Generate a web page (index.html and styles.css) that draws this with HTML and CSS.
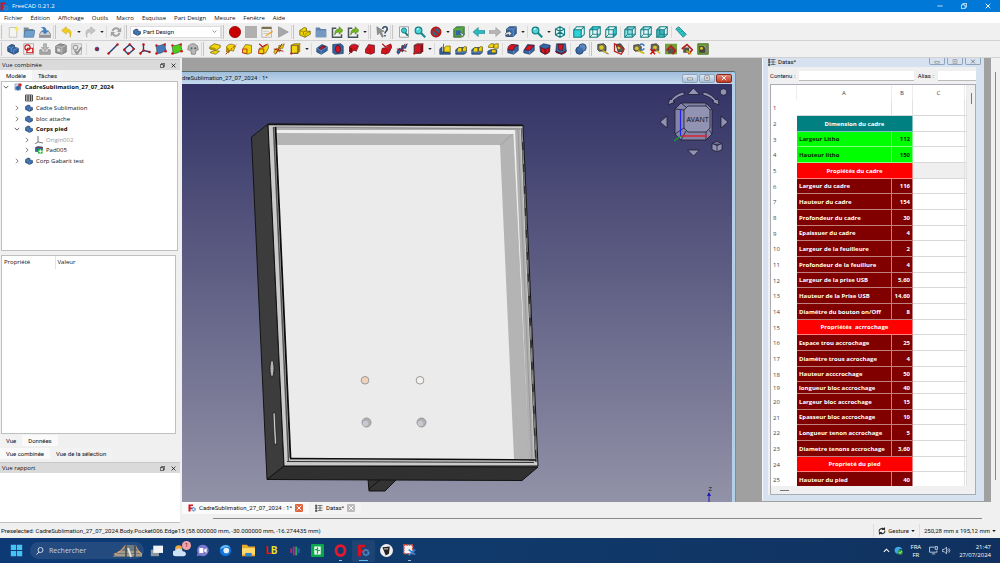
FILE: index.html
```html
<!DOCTYPE html>
<html lang="fr">
<head>
    <meta charset="UTF-8">
    <meta name="viewport" content="width=device-width, initial-scale=1.0">
    <title>FreeCAD 0.21.2</title>
    <link rel="stylesheet" href="styles.css">
</head>
<body>
    <!-- icon sprite, all on a 16x16 grid -->
    <svg class="sprite" aria-hidden="true">
        <symbol id="freecad" viewBox="0 0 16 16"><path d="M1 1h9v3H5v3h4v3H5v5H1z" fill="#d01420"/><circle cx="11" cy="10.500" r="3.200" fill="none" stroke="#4f86c6" stroke-width="2.500" stroke-dasharray="2.500 .6"/></symbol>
        <symbol id="new" viewBox="0 0 16 16"><path d="M3 2h10v13H3z" fill="#f4f4f2" stroke="#b8b8b4"/><path d="M13 0l1 3 2 1-2 1-1 3-1-3-3-1 3-1z" fill="#fce94f"/></symbol>
        <symbol id="open" viewBox="0 0 16 16"><path d="M1 2h6l1 2h6v9H1z" fill="#7a8a96"/><path d="M3 6h13l-2 9H1z" fill="#6f9fcf" stroke="#3f6f9f" stroke-width=".8"/></symbol>
        <symbol id="save" viewBox="0 0 16 16"><path d="M3 7h10l3 5v3H0v-3z" fill="#c9ccd0" stroke="#777"/><path d="M1 12h14v3H1z" fill="#8e9499"/><path d="M2 2c5-2 8 0 8 4h3l-5 5-5-5h3c0-2-1-3-4-4z" fill="#3f7fc0"/></symbol>
        <symbol id="undo" viewBox="0 0 16 16"><path d="M1 6l6-5v3c6 0 8 4 5 11 1-5-1-7-5-7v3z" fill="#f2cf1d" stroke="#c4a000" stroke-width=".7"/></symbol>
        <symbol id="redo" viewBox="0 0 16 16"><path d="M15 6L9 1v3C3 4 1 8 4 15 3 10 5 8 9 8v3z" fill="#c4c4c4" stroke="#a8a8a8" stroke-width=".7"/></symbol>
        <symbol id="refresh" viewBox="0 0 16 16"><path d="M2 7c1-6 8-7 11-3l2-2v6H9l2-2C9 3 5 4 5 7zM14 9c-1 6-8 7-11 3l-2 2V8h6l-2 2c2 3 6 2 6-1z" fill="#a2a4a0"/></symbol>
        <symbol id="record" viewBox="0 0 16 16"><circle cx="8" cy="8" r="7.500" fill="#c80000" stroke="#8f0000"/></symbol>
        <symbol id="stop" viewBox="0 0 16 16"><path d="M0 0h16v16H0z" fill="#b0b0b0"/></symbol>
        <symbol id="macro" viewBox="0 0 16 16"><path d="M1 2h13v13H1z" fill="#efefec" stroke="#aaa"/><path d="M1 1h13v3H1z" fill="#7c6f50"/><path d="M3 7h7M3 10h6" stroke="#bbb"/><path d="M15 6l-8 6-2 2 3-1 8-5z" fill="#f0a030"/></symbol>
        <symbol id="play" viewBox="0 0 16 16"><path d="M2 1l13 7-13 7z" fill="#a8a8a8" stroke="#959595"/></symbol>
        <symbol id="part" viewBox="0 0 16 16"><path d="M1 6l6-4 3 1v4l5 0v4l-7 4-7-3z" fill="#edd400" stroke="#6b5c00"/><path d="M1 6l5 2v4M6 8l4-2M8 11l7-4M8 11v4" fill="none" stroke="#8a7600"/></symbol>
        <symbol id="folder" viewBox="0 0 16 16"><path d="M1 2h5l2 2h7v11H1z" fill="#5f83ad"/><path d="M1 6h14v9H1z" fill="#7699bf"/></symbol>
        <symbol id="export" viewBox="0 0 16 16"><path d="M7 3H2v12h12v-4" fill="none" stroke="#45545e" stroke-width="2"/><path d="M5 12c0-6 2-8 6-8V1l5 5-5 5V8c-3 0-5 1-6 4z" fill="#73b81f" stroke="#3d6a08" stroke-width=".7"/></symbol>
        <symbol id="whats" viewBox="0 0 16 16"><path d="M1 1l10 6-4 1 3 6-2 1-3-6-3 3z" fill="#8e908c" stroke="#666" stroke-width=".6"/><path d="M9 4c0-4 6-4 6 0 0 3-3 3-3 6M12 12v2" fill="none" stroke="#38506c" stroke-width="2.200"/></symbol>
        <symbol id="fit" viewBox="0 0 16 16"><path d="M2 1h12v14H2z" fill="#f8f8f8" stroke="#888"/><circle cx="8" cy="6" r="3.500" fill="#34c8cc" stroke="#0d6e72"/><path d="M10 9l3 4" stroke="#0d6e72" stroke-width="2.500"/></symbol>
        <symbol id="mag" viewBox="0 0 16 16"><circle cx="6" cy="6" r="4.500" fill="#4fd3d6" stroke="#127b80" stroke-width="1.500"/><path d="M9 9l6 6" stroke="#168a90" stroke-width="3"/><path d="M4 5l2-2" stroke="#e6ffff" stroke-width="1.500"/></symbol>
        <symbol id="nodraw" viewBox="0 0 16 16"><path d="M1 8a7 7 0 1 1 14 0A7 7 0 1 1 1 8z" fill="#2c6b8a"/><circle cx="8" cy="8" r="6" fill="none" stroke="#c01a1a" stroke-width="2.500"/><path d="M4 4l8 8" stroke="#c01a1a" stroke-width="2.500"/></symbol>
        <symbol id="bbox" viewBox="0 0 16 16"><path d="M1 4l4-3h10v11l-4 3H1z" fill="#4f9a4c" stroke="#2c5a2a"/><path d="M4 6h7v6H4z" fill="#3465a4"/><path d="M1 4h10v11M11 4l4-3" fill="none" stroke="#6cc030"/><path d="M9 8l6 4-2 1 1 2" fill="#fff" stroke="#333" stroke-width=".7"/></symbol>
        <symbol id="back" viewBox="0 0 16 16"><path d="M0 8l7-6v4h9v4H7v4z" fill="#27bcc0" stroke="#12777a" stroke-width=".7"/></symbol>
        <symbol id="fwd" viewBox="0 0 16 16"><path d="M16 8L9 2v4H0v4h9v4z" fill="#b4b4b4" stroke="#999" stroke-width=".7"/></symbol>
        <symbol id="link" viewBox="0 0 16 16"><path d="M2 4l4-3h9v9l-4 4H2z" fill="#3b6ca8" stroke="#1c3760"/><path d="M2 4h9v10M11 4l4-3" fill="none" stroke="#729fcf"/><path d="M0 14c0-5 2-6 5-6V6l4 4-4 4v-3c-2 0-4 1-5 3z" fill="#dfe8f2" stroke="#222" stroke-width=".7"/></symbol>
        <symbol id="iso" viewBox="0 0 16 16"><path d="M8 1l6 3v8l-6 3-6-3V4z" fill="#e6fafa"/><path d="M8 1l6 3v8l-6 3-6-3V4zM2 4l6 3 6-3M8 1v14M2 12l6-4 6 4" fill="none" stroke="#147a80" stroke-width="1.500"/></symbol>
        <symbol id="cube" viewBox="0 0 16 16"><path d="M1 5l4-4h10v10l-4 4H1z" fill="#e4f8f8"/><path class="f" d="M1 5h10v10H1z"/><path class="t" d="M1 5l4-4h10l-4 4z"/><path class="r" d="M11 5l4-4v10l-4 4z"/><path d="M1 5l4-4h10v10l-4 4H1zM1 5h10v10M11 5l4-4" fill="none" stroke="#167d82" stroke-width="1.400"/><path class="w" d="M5 1v10h10M5 11l-4 4"/></symbol>
        <symbol id="measure" viewBox="0 0 16 16"><path d="M1 4l4-3 10 10-4 4z" fill="#2cc3c8" stroke="#12777a"/><path d="M5 5l1-1M8 8l1-1M11 11l1-1" stroke="#0a5558"/></symbol>

        <symbol id="body" viewBox="0 0 16 16"><path d="M1 5l5-3 4 1v3l5 1v5l-6 3-8-4z" fill="#3465a4" stroke="#14294a"/><path d="M1 5l5 2 4-3M6 7v5M9 9l6-2M9 9v6" fill="none" stroke="#7fa8d8" stroke-width=".8"/></symbol>
        <symbol id="sketch" viewBox="0 0 16 16"><path d="M1 1h13v14H1z" fill="#f6f6f6" stroke="#999"/><circle cx="6" cy="6" r="3.500" fill="none" stroke="#cc1111" stroke-width="1.500"/><path d="M6 7h7v6H5z" fill="none" stroke="#cc1111" stroke-width="1.500"/></symbol>
        <symbol id="import" viewBox="0 0 16 16"><path d="M1 9h3v3h8V9h3v6H1z" fill="#aaa" stroke="#888"/><path d="M6 1h4v5h3l-5 5-5-5h3z" fill="#b8b8b8" stroke="#888" stroke-width=".7"/></symbol>
        <symbol id="gbox" viewBox="0 0 16 16"><path d="M1 4l6-3 8 2v9l-6 3-8-2z" fill="#969696" stroke="#666"/><path d="M1 4l8 2v9M9 6l6-3" fill="none" stroke="#ccc"/><path d="M3 7l4 1v4l-4-1z" fill="#ddd"/></symbol>
        <symbol id="valid" viewBox="0 0 16 16"><path d="M1 1h13v14H1z" fill="#e8e8e8" stroke="#aaa"/><circle cx="6" cy="6" r="3" fill="none" stroke="#999" stroke-width="1.500"/><path d="M5 10l3 4 6-8" fill="none" stroke="#8c8c8c" stroke-width="2.500"/></symbol>
        <symbol id="point" viewBox="0 0 16 16"><circle cx="8" cy="8" r="2.500" fill="#a01c38" stroke="#1c3c78"/></symbol>
        <symbol id="line" viewBox="0 0 16 16"><path d="M2 14L14 2" stroke="#243f6e" stroke-width="1.800"/><circle cx="2" cy="14" r="1.600" fill="#c11"/><circle cx="14" cy="2" r="1.600" fill="#c11"/></symbol>
        <symbol id="plane" viewBox="0 0 16 16"><path d="M1 9l8-7 6 6-8 7z" fill="#e8f0fa" stroke="#243f6e" stroke-width="1.800"/><circle cx="2" cy="9" r="1.600" fill="#c11"/><circle cx="9" cy="2" r="1.600" fill="#c11"/><circle cx="14" cy="8" r="1.600" fill="#c11"/><circle cx="7" cy="14" r="1.600" fill="#c11"/></symbol>
        <symbol id="axes" viewBox="0 0 16 16"><path d="M6 1v9l9 2M6 10l-5 4" fill="none" stroke="#243f6e" stroke-width="1.800"/><circle cx="6" cy="2" r="1.600" fill="#c11"/><circle cx="14" cy="12" r="1.600" fill="#c11"/><circle cx="2" cy="14" r="1.600" fill="#c11"/><circle cx="6" cy="10" r="1.600" fill="#c11"/></symbol>
        <symbol id="binder" viewBox="0 0 16 16"><path d="M1 3c4 2 8-1 13-2-1 4 0 7 1 10-5 0-7 4-13 3 1-4 0-7-1-11z" fill="currentColor" stroke="#244" stroke-width=".8"/><circle cx="2" cy="14" r="1.700" fill="#d11"/><circle cx="14" cy="11" r="1.700" fill="#d11"/><circle cx="2" cy="3" r="1.500" fill="#d11"/><circle cx="13" cy="2" r="1.500" fill="#d11"/></symbol>
        <symbol id="clone" viewBox="0 0 16 16"><path d="M2 4c3-4 9-4 12 0l1 5-3 1-1 5H6l-1-5-4-1z" fill="#b8b8b8" stroke="#777"/><circle cx="6" cy="7" r="1.500" fill="#666"/><circle cx="11" cy="7" r="1.500" fill="#666"/></symbol>

        <!-- modelling operations: .m main face, .d dark face, .s sketch face -->
        <symbol id="pad" viewBox="0 0 16 16"><path class="m" d="M1 5l6-4 8 2v3l-6 4-8-2z"/><path class="d" d="M1 5l8 2v3L1 8z"/><path class="m" d="M2 12l6-2 6 1-5 4-7-2z"/></symbol>
        <symbol id="revolve" viewBox="0 0 16 16"><path class="m" d="M2 5c3-5 9-4 12-1l-3 7c-3-2-5-1-6 2L2 12z"/><path class="d" d="M2 5l4 3-1 5-3-1z"/><path d="M1 15L15 2" stroke="#a11" stroke-width="1.300" stroke-dasharray="3 1.500"/></symbol>
        <symbol id="loft" viewBox="0 0 16 16"><path class="m" d="M6 2l8 1v10l-5 2-7-2 1-6z"/><path class="s" d="M2 8l6 0v6l-6-1z"/></symbol>
        <symbol id="pipe" viewBox="0 0 16 16"><path class="m" d="M3 7l6-1 5-5 2 4-4 8-5 2-5-2z"/><path class="s" d="M3 8h6v6H2z"/><path d="M3 1l4 4 6-3" fill="none" stroke="#b11" stroke-width="1.500"/></symbol>
        <symbol id="helix" viewBox="0 0 16 16"><path class="m" d="M1 12l3-5 3 1 1-5 3 1 4-3-2 6-3 0-1 5-3-2-3 5z"/><path d="M1 8l13 3M4 14L12 1" stroke="#a11" stroke-width="1.200"/></symbol>
        <symbol id="prim" viewBox="0 0 16 16"><path class="m" d="M3 3l4-2h8l-3 3v9l-9 1z"/><path class="d" d="M12 4l3-3v10l-3 3z"/><path d="M3 3h9v11H3z" fill="none" stroke="#633"/><circle cx="3" cy="14" r="1.500" fill="#c11"/></symbol>
        <symbol id="pocket" viewBox="0 0 16 16"><path class="b" d="M1 7l7-5 7 3v5l-8 5-6-3z"/><path class="m" d="M4 7l5-3 4 1-6 4z"/><path d="M1 7l6 3v5M7 10l8-5" fill="none" stroke="#7fa8d8" stroke-width=".8"/></symbol>
        <symbol id="hole" viewBox="0 0 16 16"><path class="b" d="M1 2l11-1 3 3v10l-11 1-3-2z"/><ellipse class="m" cx="8" cy="8" rx="3.500" ry="5"/></symbol>
        <symbol id="pattern" viewBox="0 0 16 16"><path class="b" d="M1 9l4-3h10v7l-3 2H1z"/><path class="m" d="M3 9l2-3h4v6H3zM10 8l2-3h3v6h-5z"/><path d="M1 12h14" stroke="#7fa8d8" stroke-width=".8"/></symbol>
        <symbol id="mirror" viewBox="0 0 16 16"><path class="b" d="M1 8l3-3v7h9l2 1v2H1z"/><path class="m" d="M7 6l3-2h5v8H7z"/><path d="M6 1v13" stroke="#246" stroke-width="1"/></symbol>
        <symbol id="multi" viewBox="0 0 16 16"><path class="b" d="M1 11l4-2h8v5l-3 1H1z"/><path class="m" d="M2 4l3-3h4v5H2zM9 4l2-3h4v6H9zM6 9h6v4H6z"/></symbol>
        <symbol id="fillet" viewBox="0 0 16 16"><path class="b" d="M1 9l5-7 9 1v7l-6 5-8-2z"/><path class="m" d="M1 9c0-5 3-7 6-7l8 1c-4 1-6 3-6 7z"/><path d="M9 10v5" stroke="#7fa8d8"/></symbol>
        <symbol id="chamfer" viewBox="0 0 16 16"><path class="b" d="M1 10l5-8 9 1v7l-6 5-8-2z"/><path class="m" d="M2 9l5-6 8 0-6 7z"/><path d="M9 10v5" stroke="#7fa8d8"/></symbol>
        <symbol id="draft" viewBox="0 0 16 16"><path class="b" d="M1 4l5-3 9 2-1 9-6 3-6-3z"/><path class="m" d="M2 6l6 2v7l-5-3zM9 8l5-2-1 7-4 2z"/></symbol>
        <symbol id="thick" viewBox="0 0 16 16"><path class="b" d="M2 1h12l1 10-6 4-8-3z"/><path class="m" d="M4 2h7l-1 8-5-1z"/><path class="m" d="M1 11l8 3 6-4-1 3-5 2-7-2z"/></symbol>
        <symbol id="bool" viewBox="0 0 16 16"><circle cx="6" cy="10" r="5" fill="#3465a4" stroke="#1c3a68"/><circle cx="10" cy="6" r="5" fill="#5b86bb" stroke="#1c3a68"/><circle cx="7" cy="9" r="3.500" fill="#3f6faa"/></symbol>
        <symbol id="tape" viewBox="0 0 16 16"><path d="M1 2l8-1 3 3v6l-9 1-2-2z" fill="#6b6b5e" stroke="#2e2e28"/><circle cx="6" cy="6" r="3" fill="#d8c820"/><path d="M8 9l7 5v1l-8-4z" fill="#edd400" stroke="#555" stroke-width=".6"/></symbol>
        <symbol id="tape-angle" viewBox="0 0 16 16"><path d="M4 2l6-1 4 5v5l-7 1z" fill="#5c5c52" stroke="#222"/><circle cx="8" cy="6" r="2" fill="#d8c820"/><path d="M2 1v10l9 4 4-7z" fill="none" stroke="#b52020" stroke-width="1.700"/></symbol>
        <symbol id="tape-refresh" viewBox="0 0 16 16"><path d="M1 3l7-1 3 3v5l-8 1-2-2z" fill="#6b6b5e" stroke="#2e2e28"/><circle cx="5" cy="7" r="2.500" fill="#d8c820"/><path d="M9 3c3-3 5-1 6 1M15 7c-1 3-4 3-6 1" fill="none" stroke="#3f74b5" stroke-width="2"/><path d="M7 10l8 4" stroke="#cdb800" stroke-width="2"/></symbol>
        <symbol id="tape-clear" viewBox="0 0 16 16"><path d="M3 2l7-1 3 3v6l-8 1-2-2z" fill="#6b6b5e" stroke="#2e2e28"/><circle cx="8" cy="6" r="2.500" fill="#d8c820"/><path d="M2 8l6 7M8 8l-6 7" stroke="#c11" stroke-width="2"/><path d="M10 10l5 4" stroke="#cdb800" stroke-width="2"/></symbol>
        <symbol id="tape-all" viewBox="0 0 16 16"><path d="M0 1h16v14H0z" fill="#6fa03a"/><path d="M4 7h8v7H4z" fill="#55554a"/><path d="M2 10l6-6 6 6-4 5" fill="none" stroke="#b52020" stroke-width="2.500"/></symbol>
        <symbol id="tape-3d" viewBox="0 0 16 16"><path d="M3 6h8v7H3z" fill="#55554a"/><path d="M1 8l7-6 7 7-5 6" fill="none" stroke="#b52020" stroke-width="2.200"/><path d="M7 10l7 5" stroke="#cdb800" stroke-width="2"/></symbol>
        <symbol id="tape-delta" viewBox="0 0 16 16"><path d="M1 1h14v14H1z" fill="#6fa03a" stroke="#345a10"/><path d="M3 4h10v9H3z" fill="#44443c"/><circle cx="6" cy="7" r="2" fill="#d8c820"/><path d="M9 5h3v8" fill="none" stroke="#cfcfc0"/></symbol>

        <symbol id="chev" viewBox="0 0 16 16"><path d="M2 5l6 6 6-6" fill="none" stroke="currentColor" stroke-width="2.500"/></symbol>
        <symbol id="chev-r" viewBox="0 0 16 16"><path d="M5 2l6 6-6 6" fill="none" stroke="currentColor" stroke-width="2"/></symbol>
        <symbol id="tri" viewBox="0 0 16 16"><path d="M1 4h14l-7 8z" fill="currentColor"/></symbol>
        <symbol id="cross" viewBox="0 0 16 16"><path d="M2 2l12 12M14 2L2 14" fill="none" stroke="currentColor" stroke-width="2.500"/></symbol>
        <symbol id="restore" viewBox="0 0 16 16"><path d="M1 5h10v10H1zM5 5V1h10v10h-4" fill="none" stroke="currentColor" stroke-width="2"/></symbol>
        <symbol id="min" viewBox="0 0 16 16"><path d="M1 8h14" stroke="currentColor" stroke-width="2"/></symbol>
        <symbol id="mdi-min" viewBox="0 0 16 16"><path d="M1 8h14v5H1z" fill="#fff" stroke="#555" stroke-width="1.500"/></symbol>
        <symbol id="mdi-max" viewBox="0 0 16 16"><path d="M2 2h12v12H2zM6 6h4v4H6z" fill="#fff" stroke="#555" stroke-width="1.500"/></symbol>
        <symbol id="grid" viewBox="0 0 16 16"><path d="M1 2h14v12H1zM1 6h14M1 10h14M6 2v12M11 2v12" fill="#fff" stroke="#222" stroke-width="1.500"/></symbol>
        <symbol id="sheet" viewBox="0 0 16 16"><path d="M1 2h3v3H1zM1 7h3v3H1zM1 12h3v3H1zM6 3h9M6 8h9M6 13h9M10 2v12" fill="#555" stroke="#555" stroke-width="1.500"/></symbol>
        <symbol id="doc" viewBox="0 0 16 16"><path d="M2 2h8l3 3v9H2z" fill="#dce6f0" stroke="#3465a4"/><path d="M3 8l5-3 5 3v4l-5 3-5-3z" fill="#3465a4"/><circle cx="12" cy="4" r="3.500" fill="#c8232c"/></symbol>
        <symbol id="pad-tree" viewBox="0 0 16 16"><path d="M1 3l4-2 10 1v5l-4 4H1z" fill="#3465a4" stroke="#14294a"/><path d="M1 3l9 1 5-2" fill="#c22"/><path d="M6 6h9v9H6z" fill="#0fae2a"/><path d="M10.500 7v7M7 10.500h7" stroke="#fff" stroke-width="2"/></symbol>
        <symbol id="rotate" viewBox="0 0 16 16"><path d="M2 9c0-6 8-8 11-4V1M13 5H8M14 8c0 5-7 7-11 3v4M3 11h5" fill="none" stroke="#333" stroke-width="2.200"/></symbol>

        <symbol id="t-start" viewBox="0 0 16 16"><path d="M1 1h6.500v6.500H1zM8.500 1H15v6.500H8.500zM1 8.500h6.500V15H1zM8.500 8.500H15V15H8.500z" fill="#46c3f5"/></symbol>
        <symbol id="t-search" viewBox="0 0 16 16"><circle cx="9" cy="6" r="5" fill="none" stroke="#dce6f2" stroke-width="1.800"/><path d="M6 10l-5 5" stroke="#dce6f2" stroke-width="2"/></symbol>
        <symbol id="t-bridge" viewBox="0 0 30 14"><path d="M1 10C8 9 10 4 13 1l8 0c1 3 4 7 8 8v4H0z" fill="#6c7b80"/><path d="M1 10C8 9 10 4 13 1M29 10C25 8 23 3 22 1" fill="none" stroke="#d39a6a" stroke-width="1.200"/><path d="M2 11h27M5 8h22" stroke="#e0b98c"/><path d="M13 1v12M22 1v12" stroke="#3f4852" stroke-width="1.500"/><path d="M15 4l3 9" stroke="#dfe4e2" stroke-width="2"/></symbol>
        <symbol id="t-tasks" viewBox="0 0 16 16"><path d="M1 7h10v8H1z" fill="#8f979e"/><path d="M4 2h12v9H4z" fill="#f1f3f5"/></symbol>
        <symbol id="t-weather" viewBox="0 0 16 16"><circle cx="7" cy="6" r="4.500" fill="#f0a63a"/><path d="M3 15a3.500 3.500 0 0 1 0-7c2-4 8-3 9 1 5 0 5 6 1 6z" fill="#cfe2f7"/></symbol>
        <symbol id="t-chat" viewBox="0 0 16 16"><path d="M8 1a7 7 0 1 1-3 13l-4 1 1-4A7 7 0 0 1 8 1z" fill="#7b79cf"/><path d="M4 5h5v6H4zM10 7l3-2v6l-3-2z" fill="#fff"/></symbol>
        <symbol id="t-bird" viewBox="0 0 16 16"><circle cx="8" cy="8" r="7" fill="#1373d9"/><path d="M1 6C3 1 12-1 14 5c-3-2-6-1-8 0z" fill="#62b8f7"/><circle cx="9" cy="8" r="3.500" fill="#e5f0fa"/></symbol>
        <symbol id="t-files" viewBox="0 0 16 16"><path d="M0 1h6l2 2h8v12H0z" fill="#e8a92c"/><path d="M0 5h16v8H0z" fill="#ffd96a"/><path d="M4 11h8v4H4z" fill="#2e83d4"/></symbol>
        <symbol id="t-bars" viewBox="0 0 16 16"><path d="M2 4v7" stroke="#c5246f" stroke-width="3"/><path d="M6 1v14" stroke="#a82b7d" stroke-width="3"/><path d="M10 1v14" stroke="#2fa866" stroke-width="3"/><path d="M14 4v7" stroke="#2463b4" stroke-width="3"/></symbol>
        <symbol id="t-green" viewBox="0 0 16 16"><rect x="0" y="0" width="16" height="16" rx="1.500" fill="#0aa84a"/><path d="M4 3h8v10H4z" fill="#eafaf0"/><path d="M5 7h3V4M11 8H8v4" stroke="#0aa84a" fill="none" stroke-width="1.500"/></symbol>
        <symbol id="t-opera" viewBox="0 0 16 16"><ellipse cx="8" cy="8" rx="5.500" ry="6" fill="none" stroke="#e8182c" stroke-width="3.500"/></symbol>
        <symbol id="t-ink" viewBox="0 0 16 16"><circle cx="8" cy="8" r="8" fill="#f0f0f0"/><path d="M3 4l9-1-1 9-4 2z" fill="#222"/><path d="M5 6l5 0" stroke="#fff"/></symbol>
        <symbol id="t-snip" viewBox="0 0 16 16"><path d="M1 1h11v11H1z" fill="#f4f4f4" stroke="#d9443a" stroke-dasharray="2 1" stroke-width="2"/><path d="M7 7l8 6M15 7l-8 7" stroke="#2f86d8" stroke-width="2"/></symbol>
        <symbol id="t-shield" viewBox="0 0 16 16"><path d="M1 7c1-7 12-8 14 0-3-3-6-2-6 1 1 3 2 4 4 5-6 3-12 0-12-6z" fill="#3fa7e8"/><circle cx="11" cy="11" r="4.500" fill="#2d9c3c"/><path d="M9 11l2 2 3-4" stroke="#fff" fill="none" stroke-width="1.300"/></symbol>
        <symbol id="t-net" viewBox="0 0 16 16"><path d="M10 2H1v9h13V8M5 14h6M11 1h4v5h-4z" fill="none" stroke="#dfe8f2" stroke-width="1.400"/></symbol>
        <symbol id="t-vol" viewBox="0 0 16 16"><path d="M1 6h3l4-4v12l-4-4H1zM10 6q2 2 0 4M12 4q4 4 0 8" fill="none" stroke="#dfe8f2" stroke-width="1.300"/></symbol>
    </svg>

    <header class="titlebar">
        <svg class="app-icon"><use href="#freecad"/></svg>
        <span>FreeCAD 0.21.2</span>
        <div class="win-buttons">
            <button title="Réduire"><svg><use href="#min"/></svg></button>
            <button title="Restaurer"><svg><use href="#restore"/></svg></button>
            <button title="Fermer"><svg><use href="#cross"/></svg></button>
        </div>
    </header>

    <nav class="menubar">
        <button>Fichier</button><button>Édition</button><button>Affichage</button><button>Outils</button><button>Macro</button><button>Esquisse</button><button>Part Design</button><button>Mesure</button><button>Fenêtre</button><button>Aide</button>
    </nav>

    <div class="toolbar toolbar-main">
        <i class="grip first"></i>
        <button title="Nouveau"><svg><use href="#new"/></svg></button>
        <button title="Ouvrir"><svg><use href="#open"/></svg></button>
        <button title="Enregistrer"><svg><use href="#save"/></svg></button>
        <i class="grip"></i>
        <button title="Annuler"><svg><use href="#undo"/></svg></button>
        <button class="more" title="Historique"><svg><use href="#tri"/></svg></button>
        <button title="Rétablir"><svg><use href="#redo"/></svg></button>
        <button class="more" title="Historique"><svg><use href="#tri"/></svg></button>
        <i class="sep"></i>
        <button title="Rafraîchir"><svg><use href="#refresh"/></svg></button>
        <i class="grip"></i>
        <label class="workbench">
            <svg><use href="#body"/></svg>
            <select title="Atelier"><option>Part Design</option></select>
            <svg class="drop"><use href="#chev"/></svg>
        </label>
        <i class="grip"></i>
        <button title="Enregistrer une macro"><svg><use href="#record"/></svg></button>
        <button title="Arrêter"><svg><use href="#stop"/></svg></button>
        <button title="Macros"><svg><use href="#macro"/></svg></button>
        <button title="Exécuter"><svg><use href="#play"/></svg></button>
        <i class="grip"></i>
        <button title="Pièce"><svg><use href="#part"/></svg></button>
        <button title="Groupe"><svg><use href="#folder"/></svg></button>
        <button title="Lien"><svg><use href="#export"/></svg></button>
        <button title="Sous-lien"><svg><use href="#export"/></svg></button>
        <button class="more" title="Plus"><svg><use href="#tri"/></svg></button>
        <i class="grip"></i>
        <button title="Qu'est-ce que c'est ?"><svg><use href="#whats"/></svg></button>
        <i class="grip"></i>
        <button title="Tout afficher"><svg><use href="#fit"/></svg></button>
        <button title="Afficher la sélection"><svg><use href="#mag"/></svg></button>
        <button title="Style de représentation"><svg><use href="#nodraw"/></svg></button>
        <button class="more" title="Plus"><svg><use href="#tri"/></svg></button>
        <button title="Boîte englobante"><svg><use href="#bbox"/></svg></button>
        <i class="sep wide"></i>
        <button title="Précédent"><svg><use href="#back"/></svg></button>
        <button title="Suivant"><svg><use href="#fwd"/></svg></button>
        <button title="Aller à l'objet lié"><svg><use href="#link"/></svg></button>
        <button class="more" title="Plus"><svg><use href="#tri"/></svg></button>
        <i class="sep"></i>
        <button title="Zoom"><svg><use href="#mag"/></svg></button>
        <button class="more" title="Plus"><svg><use href="#tri"/></svg></button>
        <button title="Isométrique"><svg><use href="#iso"/></svg></button>
        <i class="sep"></i>
        <button class="face-front" title="Avant"><svg><use href="#cube"/></svg></button>
        <button class="face-top" title="Dessus"><svg><use href="#cube"/></svg></button>
        <button class="face-right" title="Droite"><svg><use href="#cube"/></svg></button>
        <i class="sep"></i>
        <button class="face-rear" title="Arrière"><svg><use href="#cube"/></svg></button>
        <button class="face-bottom" title="Dessous"><svg><use href="#cube"/></svg></button>
        <button class="face-left" title="Gauche"><svg><use href="#cube"/></svg></button>
        <i class="sep"></i>
        <button title="Mesurer"><svg><use href="#measure"/></svg></button>
    </div>

    <div class="toolbar toolbar-design">
        <i class="grip first"></i>
        <button title="Corps"><svg><use href="#body"/></svg></button>
        <button title="Esquisse"><svg><use href="#sketch"/></svg></button>
        <button title="Éditer"><svg><use href="#import"/></svg></button>
        <button title="Appliquer"><svg><use href="#gbox"/></svg></button>
        <button title="Valider"><svg><use href="#valid"/></svg></button>
        <i class="sep"></i>
        <button title="Point"><svg><use href="#point"/></svg></button>
        <button title="Ligne"><svg><use href="#line"/></svg></button>
        <button title="Plan"><svg><use href="#plane"/></svg></button>
        <button title="Repère"><svg><use href="#axes"/></svg></button>
        <button class="blue" title="Forme liée"><svg><use href="#binder"/></svg></button>
        <button class="green" title="Sous-forme liée"><svg><use href="#binder"/></svg></button>
        <button title="Clone"><svg><use href="#clone"/></svg></button>
        <i class="grip"></i>
        <button class="add" title="Protrusion"><svg><use href="#pad"/></svg></button>
        <button class="add" title="Révolution"><svg><use href="#revolve"/></svg></button>
        <button class="add" title="Lissage"><svg><use href="#loft"/></svg></button>
        <button class="add" title="Balayage"><svg><use href="#pipe"/></svg></button>
        <button class="add" title="Hélice"><svg><use href="#helix"/></svg></button>
        <button class="add" title="Primitive"><svg><use href="#prim"/></svg></button>
        <button class="more" title="Plus"><svg><use href="#tri"/></svg></button>
        <i class="sep"></i>
        <button class="cut" title="Cavité"><svg><use href="#pocket"/></svg></button>
        <button class="cut" title="Perçage"><svg><use href="#hole"/></svg></button>
        <button class="cut" title="Rainure"><svg><use href="#revolve"/></svg></button>
        <button class="cut" title="Lissage soustractif"><svg><use href="#loft"/></svg></button>
        <button class="cut" title="Balayage soustractif"><svg><use href="#pipe"/></svg></button>
        <button class="cut-blue" title="Hélice soustractive"><svg><use href="#helix"/></svg></button>
        <button class="cut" title="Primitive soustractive"><svg><use href="#prim"/></svg></button>
        <button class="more" title="Plus"><svg><use href="#tri"/></svg></button>
        <i class="sep"></i>
        <button class="add" title="Symétrie"><svg><use href="#mirror"/></svg></button>
        <button class="add" title="Répétition linéaire"><svg><use href="#pattern"/></svg></button>
        <button class="add" title="Répétition circulaire"><svg><use href="#pattern"/></svg></button>
        <button class="add" title="Transformation multiple"><svg><use href="#multi"/></svg></button>
        <i class="sep"></i>
        <button class="cut" title="Congé"><svg><use href="#fillet"/></svg></button>
        <button class="cut" title="Chanfrein"><svg><use href="#chamfer"/></svg></button>
        <button class="cut" title="Dépouille"><svg><use href="#draft"/></svg></button>
        <button class="cut" title="Évidement"><svg><use href="#thick"/></svg></button>
        <i class="sep"></i>
        <button title="Opération booléenne"><svg><use href="#bool"/></svg></button>
        <i class="grip"></i>
        <button title="Mesure linéaire"><svg><use href="#tape"/></svg></button>
        <button title="Mesure angulaire"><svg><use href="#tape-angle"/></svg></button>
        <i class="sep"></i>
        <button title="Rafraîchir"><svg><use href="#tape-refresh"/></svg></button>
        <button title="Effacer"><svg><use href="#tape-clear"/></svg></button>
        <button title="Tout basculer"><svg><use href="#tape-all"/></svg></button>
        <button title="Basculer 3D"><svg><use href="#tape-3d"/></svg></button>
        <button title="Basculer delta"><svg><use href="#tape-delta"/></svg></button>
    </div>

    <main class="workspace">
        <aside class="docks">
            <div class="dock-title"><span>Vue combinée</span><button title="Détacher"><svg><use href="#restore"/></svg></button><button title="Fermer"><svg><use href="#cross"/></svg></button></div>
            <div class="tabs tabs-top">
                <button class="active">Modèle</button>
                <button>Tâches</button>
            </div>
            <ul class="tree">
                <li class="bold"><svg><use href="#chev"/></svg><svg class="ico"><use href="#doc"/></svg>CadreSublimation_27_07_2024</li>
                <li class="l1"><svg></svg><svg class="ico"><use href="#grid"/></svg>Datas</li>
                <li class="l1"><svg><use href="#chev-r"/></svg><svg class="ico"><use href="#body"/></svg>Cadte Sublimation</li>
                <li class="l1"><svg><use href="#chev-r"/></svg><svg class="ico"><use href="#body"/></svg>bloc attache</li>
                <li class="l1 bold"><svg><use href="#chev"/></svg><svg class="ico"><use href="#body"/></svg>Corps pied</li>
                <li class="l2 hidden-item"><svg><use href="#chev-r"/></svg><svg class="ico"><path d="M3 0v6l5 1M3 6L0 8" fill="none" stroke="#777"/></svg>Origin002</li>
                <li class="l2"><svg><use href="#chev-r"/></svg><svg class="ico"><use href="#pad-tree"/></svg>Pad005</li>
                <li class="l1"><svg><use href="#chev-r"/></svg><svg class="ico"><use href="#body"/></svg>Corp Gabarit test</li>
            </ul>
            <div class="props">
                <table>
                    <tr><th>Propriété</th><th>Valeur</th></tr>
                </table>
            </div>
            <div class="tabs tabs-props">
                <button>Vue</button>
                <button class="active">Données</button>
            </div>
            <div class="tabs tabs-dock">
                <button class="active">Vue combinée</button>
                <button>Vue de la sélection</button>
            </div>
            <div class="dock-title"><span>Vue rapport</span><button title="Détacher"><svg><use href="#restore"/></svg></button><button title="Fermer"><svg><use href="#cross"/></svg></button></div>
            <div class="report"></div>
        </aside>

        <section class="center">
            <div class="mdi">
                <div class="win-3d">
                    <div class="sub-title">
                        <span>dreSublimation_27_07_2024 : 1*</span>
                        <button title="Réduire"><svg><use href="#mdi-min"/></svg></button>
                        <button title="Agrandir"><svg><use href="#mdi-max"/></svg></button>
                        <button class="close" title="Fermer"><svg><use href="#cross"/></svg></button>
                    </div>
                    <div class="view">
                        <svg viewBox="182 84 550 418">
                            <!-- foot and outer sides -->
                            <path d="M368 479h29l-12 12h-16z" fill="#333" stroke="#111"/>
                            <path d="M369 489l12-10" stroke="#111"/>
                            <path d="M251.500 137L268 124l16 342-17 13.500z" fill="#3c3c3c" stroke="#151515"/>
                            <path d="M284 466l254 1-16 13.500-255-1z" fill="#303030" stroke="#111"/>
                            <!-- front frame -->
                            <path d="M268 124l255 1 15 341-254 0z" fill="#cacaca" stroke="#111"/>
                            <path d="M275 127l245 1 14 334-244-2z" fill="#b0b0b0"/>
                            <path d="M275 130l240 0 14 331-239-2z" fill="#efefef"/>
                            <path d="M276 133l237 1 16 326-239-2z" fill="#b4b4b4"/>
                            <path d="M276 145l224 0 14 314-224-1z" fill="#ebebeb"/>
                            <path d="M500 145l13-11" stroke="#999" stroke-width=".7"/>
                            <path d="M513 134l16 326" stroke="#aaa" stroke-width=".7"/>
                            <path d="M518 130l14 331" stroke="#999"/>
                            <path d="M522 128l14 334" stroke="#333" stroke-width="2"/>
                            <path d="M522 128l14 334" stroke="#aaa" stroke-width=".8" stroke-dasharray="14 8"/>
                            <path d="M274 127l248 2" stroke="#888"/>
                            <path d="M268 124.500l255 1" stroke="#141414" stroke-width="1.500"/>
                            <path d="M273.500 127l15 334" stroke="#555" stroke-width="1.500"/>
                            <path d="M275.500 127l15 331" stroke="#0c0c0c" stroke-width="1.800"/>
                            <path d="M290 458.500l246 1.500" stroke="#0c0c0c" stroke-width="1.500"/>
                            <path d="M287 461.500l247 1" stroke="#333"/>
                            <!-- side openings -->
                            <ellipse cx="272" cy="368.500" rx="2" ry="8.500" fill="#b5b5b5" stroke="#111" stroke-width=".8"/>
                            <path d="M273 413l2 0 1.500 31-2 0z" fill="#d8d8d8" stroke="#111" stroke-width=".6"/>
                            <!-- back plate holes -->
                            <circle cx="365" cy="380.300" r="3.800" fill="#f0d2b8" stroke="#999"/>
                            <circle cx="420" cy="380.300" r="3.800" fill="#f3f0ee" stroke="#999"/>
                            <circle cx="366.500" cy="422.500" r="4.500" fill="#b0b0b0" stroke="#999"/>
                            <circle cx="365.500" cy="423.500" r="2.800" fill="#c8c8d2"/>
                            <circle cx="421.500" cy="422.500" r="4.500" fill="#b0b0b0" stroke="#999"/>
                            <circle cx="420.500" cy="423.500" r="2.800" fill="#c8c8d2"/>
                            <!-- navigation cube -->
                            <g fill="#9292b2" stroke="#1c1c30" stroke-width=".8">
                                <path d="M693.500 88l6 6.500h-12zM660 122l7-6v12zM728 122l-7-6v12zM693.500 156l-6-6h12z"/>
                                <circle cx="723.500" cy="92" r="3.300"/>
                                <path d="M684 92c-6 1-10 4-13 8l-1-2-2 7 7-3-2-1c3-3 6-5 11-6zM703 92c6 1 10 4 13 8l2-1 1 6-7-3 2-1c-3-3-6-5-11-6z"/>
                                <path d="M681 103h25l6 6v25l-6 6h-25l-6-6v-25z" fill="#8484a6"/>
                                <path d="M688 106h18l4 4v18l-4 4h-18l-4-4v-18z"/>
                                <path d="M681 103l5 4M706 103v3M712 109l-2 1M712 134l-3-4M706 140v-8M681 140l5-9M675 109l9 1M675 134l9-6"/>
                                <path d="M712 143.500l5-2 5 2v6l-5 2.500-5-2.500zM712 143.500l5 2 5-2M717 145.500v6.500"/>
                            </g>
                            <path d="M680.500 110v26" stroke="#2020f0" stroke-width="1.200"/>
                            <path d="M681 136h26" stroke="#e02030" stroke-width="1.500"/>
                            <path d="M681 136l-7 5" stroke="#18a030" stroke-width="1.200"/>
                            <text x="697.500" y="121.500" text-anchor="middle" font-size="7" fill="#111">AVANT</text>
                            <!-- axis cross -->
                            <text x="708.500" y="491" font-size="6" fill="#111">Z</text>
                            <path d="M709 493v9" stroke="#1c1cb8"/>
                            <path d="M707 496l2-4 2 4z" fill="#1c1cb8"/>
                        </svg>
                    </div>
                </div>

                <div class="win-sheet">
                    <div class="sub-title">
                        <svg class="ico"><use href="#sheet"/></svg>
                        <span>Datas*</span>
                        <button title="Réduire"><svg><use href="#mdi-min"/></svg></button>
                        <button title="Agrandir"><svg><use href="#mdi-max"/></svg></button>
                        <button title="Fermer"><svg><use href="#cross"/></svg></button>
                    </div>
                    <div class="sheet-body">
                        <div class="cell-bar">
                            <label for="contenu">Contenu :</label><input id="contenu" type="text">
                            <label for="alias">Alias :</label><input id="alias" type="text">
                        </div>
                        <div class="sheet-box">
                            <div class="sheet-clip">
                                <table class="sheet">
                                    <colgroup><col class="c-num"><col class="c-a"><col class="c-b"><col><col class="c-d"></colgroup>
                                    <thead><tr><th></th><th>A</th><th class="current">B</th><th>C</th><th></th></tr></thead>
                                    <tbody>
                                        <tr><th class="current">1</th><td></td><td></td><td></td><td></td></tr>
                                        <tr class="teal"><th>2</th><td colspan="2">Dimension du cadre</td><td></td><td></td></tr>
                                        <tr class="lime"><th>3</th><td>Largeur Litho</td><td>112</td><td></td><td></td></tr>
                                        <tr class="lime"><th>4</th><td>Hauteur litho</td><td>150</td><td></td><td></td></tr>
                                        <tr class="red selected"><th>5</th><td colspan="2">Propiétés du cadre</td><td></td><td></td></tr>
                                        <tr class="dark"><th>6</th><td>Largeur du cadre</td><td>116</td><td></td><td></td></tr>
                                        <tr class="dark"><th>7</th><td>Hauteur du cadre</td><td>154</td><td></td><td></td></tr>
                                        <tr class="dark"><th>8</th><td>Profondeur du cadre</td><td>30</td><td></td><td></td></tr>
                                        <tr class="dark"><th>9</th><td>Epaissuer du cadre</td><td>4</td><td></td><td></td></tr>
                                        <tr class="dark"><th>10</th><td>Largeur de la feuilleure</td><td>2</td><td></td><td></td></tr>
                                        <tr class="dark"><th>11</th><td>Profondeur de la feuillure</td><td>4</td><td></td><td></td></tr>
                                        <tr class="dark"><th>12</th><td>Largeur de la prise USB</td><td>5,60</td><td></td><td></td></tr>
                                        <tr class="dark"><th>13</th><td>Hauteur de la Prise USB</td><td>14,60</td><td></td><td></td></tr>
                                        <tr class="dark"><th>14</th><td>Diamétre du bouton on/Off</td><td>8</td><td></td><td></td></tr>
                                        <tr class="red"><th>15</th><td colspan="2">Propriétés &nbsp;acrrochage</td><td></td><td></td></tr>
                                        <tr class="dark"><th>16</th><td>Espace trou accrochage</td><td>25</td><td></td><td></td></tr>
                                        <tr class="dark"><th>17</th><td>Diamétre trous acrochage</td><td>4</td><td></td><td></td></tr>
                                        <tr class="dark"><th>18</th><td>Hauteur acccrochage</td><td>50</td><td></td><td></td></tr>
                                        <tr class="dark short"><th>19</th><td>longueur bloc accrochage</td><td>40</td><td></td><td></td></tr>
                                        <tr class="dark"><th>20</th><td>Largeur bloc accrochage</td><td>15</td><td></td><td></td></tr>
                                        <tr class="dark"><th>21</th><td>Epasseur bloc accrochage</td><td>10</td><td></td><td></td></tr>
                                        <tr class="dark"><th>22</th><td>Longueur tenon accrochage</td><td>5</td><td></td><td></td></tr>
                                        <tr class="dark"><th>23</th><td>Diametre tenons accrochage</td><td>3,60</td><td></td><td></td></tr>
                                        <tr class="red"><th>24</th><td colspan="2">Proprieté du pied</td><td></td><td></td></tr>
                                        <tr class="dark"><th>25</th><td>Hauteur du pied</td><td>40</td><td></td><td></td></tr>
                                    </tbody>
                                </table>
                            </div>
                            <div class="v-track"><i></i></div>
                            <div class="h-track"><i></i></div>
                        </div>
                    </div>
                </div>
            </div>
            <div class="doc-tabs">
                <button class="active"><svg><use href="#freecad"/></svg>CadreSublimation_27_07_2024 : 1*<svg class="x"><use href="#cross"/></svg></button>
                <button><svg><use href="#sheet"/></svg>Datas*<svg class="x"><use href="#cross"/></svg></button>
            </div>
            <div class="mdi-hscroll"><i></i></div>
        </section>
        <div class="mdi-vscroll"><i></i></div>
    </main>

    <footer class="statusbar">
        <span class="msg">Preselected: CadreSublimation_27_07_2024.Body.Pocket006.Edge15 (58.000000 mm, -30.000000 mm, -16.274435 mm)</span>
        <button><svg><use href="#rotate"/></svg>Gesture<svg class="drop"><use href="#tri"/></svg></button>
        <button>250,28 mm x 195,12 mm<svg class="drop"><use href="#tri"/></svg></button>
    </footer>

    <div class="taskbar">
        <button class="app" title="Démarrer"><svg><use href="#t-start"/></svg></button>
        <label class="search">
            <svg><use href="#t-search"/></svg>
            <input type="text" placeholder="Rechercher">
            <svg class="bridge"><use href="#t-bridge"/></svg>
        </label>
        <div class="apps">
            <button class="app" title="Bureaux"><svg><use href="#t-tasks"/></svg></button>
            <button class="app" title="Météo"><svg><use href="#t-weather"/></svg><b class="badge">1</b></button>
            <button class="app" title="Conversation"><svg><use href="#t-chat"/></svg></button>
            <button class="app" title="Thunderbird"><svg><use href="#t-bird"/></svg></button>
            <button class="app" title="Explorateur"><svg><use href="#t-files"/></svg></button>
            <button class="app lb" title="LB"><span>L</span><span>B</span></button>
            <button class="app narrow" title="Audio"><svg><use href="#t-bars"/></svg></button>
            <button class="app" title="Tableur"><svg><use href="#t-green"/></svg></button>
            <button class="app running" title="Opera"><svg><use href="#t-opera"/></svg></button>
            <button class="app running focused" title="FreeCAD"><svg><use href="#freecad"/></svg></button>
            <button class="app" title="Inkscape"><svg><use href="#t-ink"/></svg></button>
            <button class="app running" title="Capture"><svg><use href="#t-snip"/></svg></button>
        </div>
        <div class="tray">
            <svg class="up"><use href="#chev"/></svg>
            <svg><use href="#t-shield"/></svg>
            <div class="lang">FRA<br>FR</div>
            <svg><use href="#t-net"/></svg>
            <svg><use href="#t-vol"/></svg>
            <div class="clock">21:47<br>27/07/2024</div>
        </div>
    </div>
</body>
</html>
```

FILE: styles.css
```css
* { box-sizing: border-box; }
body { margin: 0; height: 100vh; display: flex; flex-direction: column; overflow: hidden; background: #f0f0f0; color: #111; font-family: "Open Sans", "Noto Sans", sans-serif; font-size: 6px; line-height: 8px; }
button, input, select { font: inherit; color: inherit; border: 0; background: none; padding: 0; margin: 0; }
button { display: flex; align-items: center; justify-content: center; white-space: nowrap; }
svg { display: block; flex: none; }
.sprite { width: 0; height: 0; position: absolute; }

.titlebar { height: 12px; flex: none; display: flex; align-items: center; gap: 3px; background: #0078d7; color: #fff; }
.app-icon { width: 9px; height: 9px; }
.win-buttons { margin-left: auto; display: flex; }
.win-buttons button { width: 24px; height: 12px; }
.win-buttons svg { width: 6px; height: 6px; }

.menubar { height: 11px; flex: none; display: flex; background: #fff; }
.menubar button { padding: 0 4px; }

.toolbar { height: 17px; flex: none; display: flex; align-items: center; border-bottom: 1px solid #d2d2d2; }
.toolbar-main { height: 18px; }
.toolbar button { width: 16px; height: 16px; }
.toolbar svg { width: 12px; height: 12px; }
.toolbar .more { width: 7px; color: #222; }
.toolbar .more svg { width: 4px; height: 4px; }
.grip { width: 6px; height: 14px; flex: none; border-left: 1px solid #d8d8d8; background: linear-gradient(90deg, transparent 1px, #c4c4c4 1px, #c4c4c4 2px, transparent 2px); }
.grip.first { width: 5px; border: 0; }
.sep { width: 4px; height: 12px; flex: none; background: linear-gradient(90deg, transparent 1px, #dadada 1px, #dadada 2px, transparent 2px); }
.toolbar-main .sep { width: 3px; }
.toolbar-main .wide { width: 4px; }
.workbench { width: 91px; height: 12px; display: flex; align-items: center; gap: 2px; padding: 0 3px 0 2px; background: #fff; border: 1px solid #ddd; }
.toolbar .workbench svg { width: 8px; height: 8px; }
.workbench select { flex: 1; appearance: none; font-family: Roboto, sans-serif; }
.toolbar .workbench .drop { width: 5px; height: 5px; color: #777; }

/* face colours of the modelling icons, inherited through <use> */
.add { --m: #f0d50c; --d: #b39700; --k: #5c4b00; }
.cut { --m: #d41420; --d: #8f0a12; --k: #3a1020; }
.cut-blue { --m: #3465a4; --d: #1c3a68; --k: #14294a; }
.blue { color: #4478b8; }
.green { color: #4fce18; }
.m { fill: var(--m); stroke: var(--k); stroke-width: .8; }
.d { fill: var(--d); }
.s { fill: var(--m); stroke: #b01414; stroke-width: 1; }
.b { fill: #3465a4; stroke: #14294a; stroke-width: .8; }
.f { fill: var(--f, none); }
.t { fill: var(--t, none); }
.r { fill: var(--r, none); }
.w { fill: none; stroke: var(--w, #167d82); stroke-width: 1.200; }
.face-front { --f: #2fd0d6; --w: none; }
.face-top { --t: #2fd0d6; }
.face-right { --r: #2fd0d6; }
.face-rear { --f: #8edfe2; --t: #7cc9cc; }
.face-bottom { --t: #9fe6e8; }
.face-left { --f: #3fb5ba; }

.workspace { flex: 1; min-height: 0; display: flex; }
.docks { width: 182px; flex: none; display: flex; flex-direction: column; padding: 1px 2px 0 0; }
.dock-title { height: 11px; flex: none; display: flex; align-items: center; gap: 6px; padding: 0 4px 0 2px; background: #dadada; border-top: 1px solid #c8c8c8; }
.dock-title span { flex: 1; }
.dock-title svg { width: 5px; height: 5px; }
.tabs { flex: none; display: flex; align-items: center; height: 12px; font-family: Roboto, sans-serif; }
.tabs button { height: 11px; padding: 0 6px; background: #f2f2f2; }
.tabs .active { background: #fafafa; }
.tabs-top { height: 11px; }
.tree { flex: 0 1 170px; margin: 0 2px 4px 1px; padding: 0; list-style: none; background: #fff; border: 1px solid #c0c0c0; }
.tree li { height: 10px; display: flex; align-items: center; white-space: nowrap; }
.tree li:nth-child(even) { height: 11px; }
.tree li svg { width: 6px; height: 6px; margin: 0 5px 0 1px; color: #555; }
.tree li .ico { width: 8px; height: 8px; margin: 0 3px 0 0; }
.tree .l1 { padding-left: 11px; }
.tree .l2 { padding-left: 21px; }
.bold { font-weight: bold; }
.hidden-item { color: #999; }
.props { flex: 1 1 180px; margin: 0 4px 0 1px; background: #fff; border: 1px solid #c0c0c0; }
.props table { width: 100%; border-collapse: collapse; table-layout: fixed; }
.props th { height: 13px; padding: 0 2px; text-align: left; font-weight: normal; }
.props th:first-child { width: 53px; border-right: 1px solid #e4e4e4; }
.tabs-props { height: 13px; }
.tabs-dock { height: 13px; margin-bottom: 2px; }
.report { height: 50px; flex: none; background: #fff; border-bottom: 1px solid #c0c0c0; }

.center { flex: 1; min-width: 0; display: flex; flex-direction: column; }
.mdi { flex: 1; min-height: 0; display: flex; overflow: hidden; background: #a0a0a0; }
.win-3d { flex: 1; min-width: 0; margin-top: 13px; display: flex; flex-direction: column; padding-right: 3px; background: #b4cfe8; border-top: 1px solid #566; border-right: 1px solid #2fa9d0; border-radius: 0 3px 0 0; }
.sub-title { height: 12px; flex: none; display: flex; align-items: center; gap: 1px; font-family: Roboto, sans-serif; }
.sub-title span { flex: 1; }
.sub-title button { width: 16px; height: 9px; border: 1px solid #8fa4ba; border-radius: 2px; background: linear-gradient(#dbe7f3, #a9c0d8); color: #666; }
.sub-title button svg { width: 6px; height: 6px; }
.win-3d .sub-title { background: linear-gradient(#9fbddb, #c5daee); }
.sub-title .close { border-color: #8c2a1c; background: linear-gradient(#e08c7c, #c03a24); color: #fff; }
.view { flex: 1; min-height: 0; background: linear-gradient(#333366, #9292a8); }
.view svg { width: 100%; height: 100%; }

.win-sheet { width: 222px; flex: none; margin: 0 7px 1px 26px; padding: 0 3px 6px 5px; display: flex; flex-direction: column; background: #d6e2f0; border-left: 1px solid #f4f8fc; }
.win-sheet .sub-title { height: 9px; gap: 2px; align-items: flex-start; }
.win-sheet .sub-title .ico { width: 8px; height: 8px; }
.win-sheet .sub-title button { height: 7px; border-top: 0; border-radius: 0 0 2px 2px; background: #d6e2f0; }
.win-sheet .sub-title button svg { height: 5px; }
.sheet-body { flex: 1; min-height: 0; display: flex; flex-direction: column; margin-right: 5px; padding: 4px 0 0 2px; background: #f0f0f0; }
.cell-bar { height: 10px; flex: none; display: flex; align-items: center; gap: 4px; margin-bottom: 3px; font-family: Roboto, sans-serif; }
.cell-bar input { flex: 3; min-width: 0; height: 10px; background: #fff; border-bottom: 1px solid #bbb; }
.cell-bar #alias { flex: 1; }
.sheet-box { flex: 1; min-height: 0; display: grid; grid-template-columns: 1fr 8px; grid-template-rows: 1fr 8px; border: 1px solid #a8acb4; overflow: hidden; }
.sheet-clip { min-height: 0; overflow: hidden; background: #fff; }
.sheet { width: 100%; table-layout: fixed; border-collapse: separate; border-spacing: 0; }
.c-num { width: 26px; }
.c-a { width: 95px; }
.c-b { width: 21px; }
.c-d { width: 2px; }
.sheet td, .sheet th { padding: 0 2px; border-right: 1px solid #e2e2e2; border-bottom: 1px solid #d8d8d8; white-space: nowrap; }
.sheet tr { height: 16px; }
.sheet thead tr, .sheet tbody tr:nth-child(3n) { height: 15px; }
.sheet tbody .short { height: 12px; }
.sheet th { font-weight: normal; color: #444; border-bottom: 0; }
.sheet thead th { border-color: #ededed; }
.sheet tbody th { text-align: left; border: 0; }
.sheet .current { color: #24456b; }
.sheet tbody .current { color: #7a2048; }
.sheet td:nth-child(3) { text-align: right; }
.sheet td[colspan] { text-align: center; }
.teal, .lime, .red, .dark { font-weight: bold; }
.teal td:nth-child(2), .lime td:nth-child(-n+3), .red td:nth-child(2), .dark td:nth-child(-n+3) { color: #fff; border-color: rgba(255, 255, 255, .5); }
.teal td:nth-child(2) { background: #008080; }
.lime td:nth-child(-n+3) { background: #00ff00; color: #002800; }
.red td:nth-child(2) { background: #ff0000; }
.dark td:nth-child(-n+3) { background: #800000; }
.selected td:nth-child(n+3) { background: #efefef; }
.v-track { display: flex; justify-content: center; padding-top: 8px; }
.v-track i { width: 1px; height: 11px; background: #777; }
.h-track { display: flex; align-items: center; padding-left: 9px; }
.h-track i { width: 9px; height: 1px; background: #777; }

.doc-tabs { height: 12px; flex: none; display: flex; font-family: Roboto, sans-serif; }
.doc-tabs button { gap: 3px; padding: 0 6px; background: #f3f3f3; }
.doc-tabs .active { background: #fafafa; }
.doc-tabs svg { width: 8px; height: 8px; }
.doc-tabs .x { padding: 1px; background: #bbb; color: #fff; border-radius: 1px; }
.doc-tabs .active .x { background: #e0643f; }
.mdi-hscroll { height: 9px; flex: none; display: flex; align-items: center; padding: 0 9px 0 31px; }
.mdi-hscroll i { flex: 1; height: 1px; background: #888; }
.mdi-vscroll { width: 9px; flex: none; display: flex; justify-content: center; padding: 14px 0 43px; }
.mdi-vscroll i { width: 1px; background: #888; }

.statusbar { height: 15px; flex: none; display: flex; align-items: center; font-family: Roboto, sans-serif; }
.statusbar .msg { flex: 1; padding-left: 1px; white-space: nowrap; }
.statusbar button { height: 13px; gap: 2px; padding: 0 4px; border-left: 1px solid #ddd; }
.statusbar svg { width: 8px; height: 8px; }
.statusbar .drop { width: 4px; height: 4px; }

.taskbar { height: 25px; flex: none; display: flex; align-items: center; padding: 0 9px 0 5px; background: linear-gradient(90deg, #0d3a75, #103a6a 50%, #10315f); color: #fff; }
.app { width: 23px; height: 22px; position: relative; flex: none; border-radius: 2px; }
.app svg { width: 13px; height: 13px; }
.narrow svg { width: 10px; height: 10px; }
.search { width: 114px; height: 17px; margin: 0 1px 0 2px; padding: 0 1px 0 6px; display: flex; align-items: center; gap: 5px; border-radius: 9px; background: #234b80; font-size: 7px; }
.search svg { width: 8px; height: 8px; }
.search input { flex: 1; min-width: 0; outline: 0; }
.search input::placeholder { color: #c5d2e2; opacity: 1; }
.search .bridge { width: 30px; height: 14px; }
.apps { display: flex; }
.badge { position: absolute; right: 0; top: 1px; width: 9px; height: 9px; border-radius: 5px; background: #f3a2a8; color: #401018; font-weight: normal; line-height: 9px; }
.lb { font-size: 10px; font-weight: bold; font-family: Roboto, sans-serif; }
.lb span { color: #f0e020; }
.lb span:first-child { color: #e01818; }
.running::after { content: ""; position: absolute; left: 10px; right: 10px; bottom: 1px; height: 1px; background: #a8b8cc; }
.focused { background: #1d4474; }
.focused::after { left: 7px; right: 7px; background: #5cb8f0; }
.tray { margin-left: auto; display: flex; align-items: center; gap: 4px; text-align: center; }
.tray svg { width: 9px; height: 9px; }
.tray .up { width: 7px; height: 7px; transform: rotate(180deg); }
.lang { padding: 0 4px; }
.clock { margin-left: 4px; text-align: right; }
```
